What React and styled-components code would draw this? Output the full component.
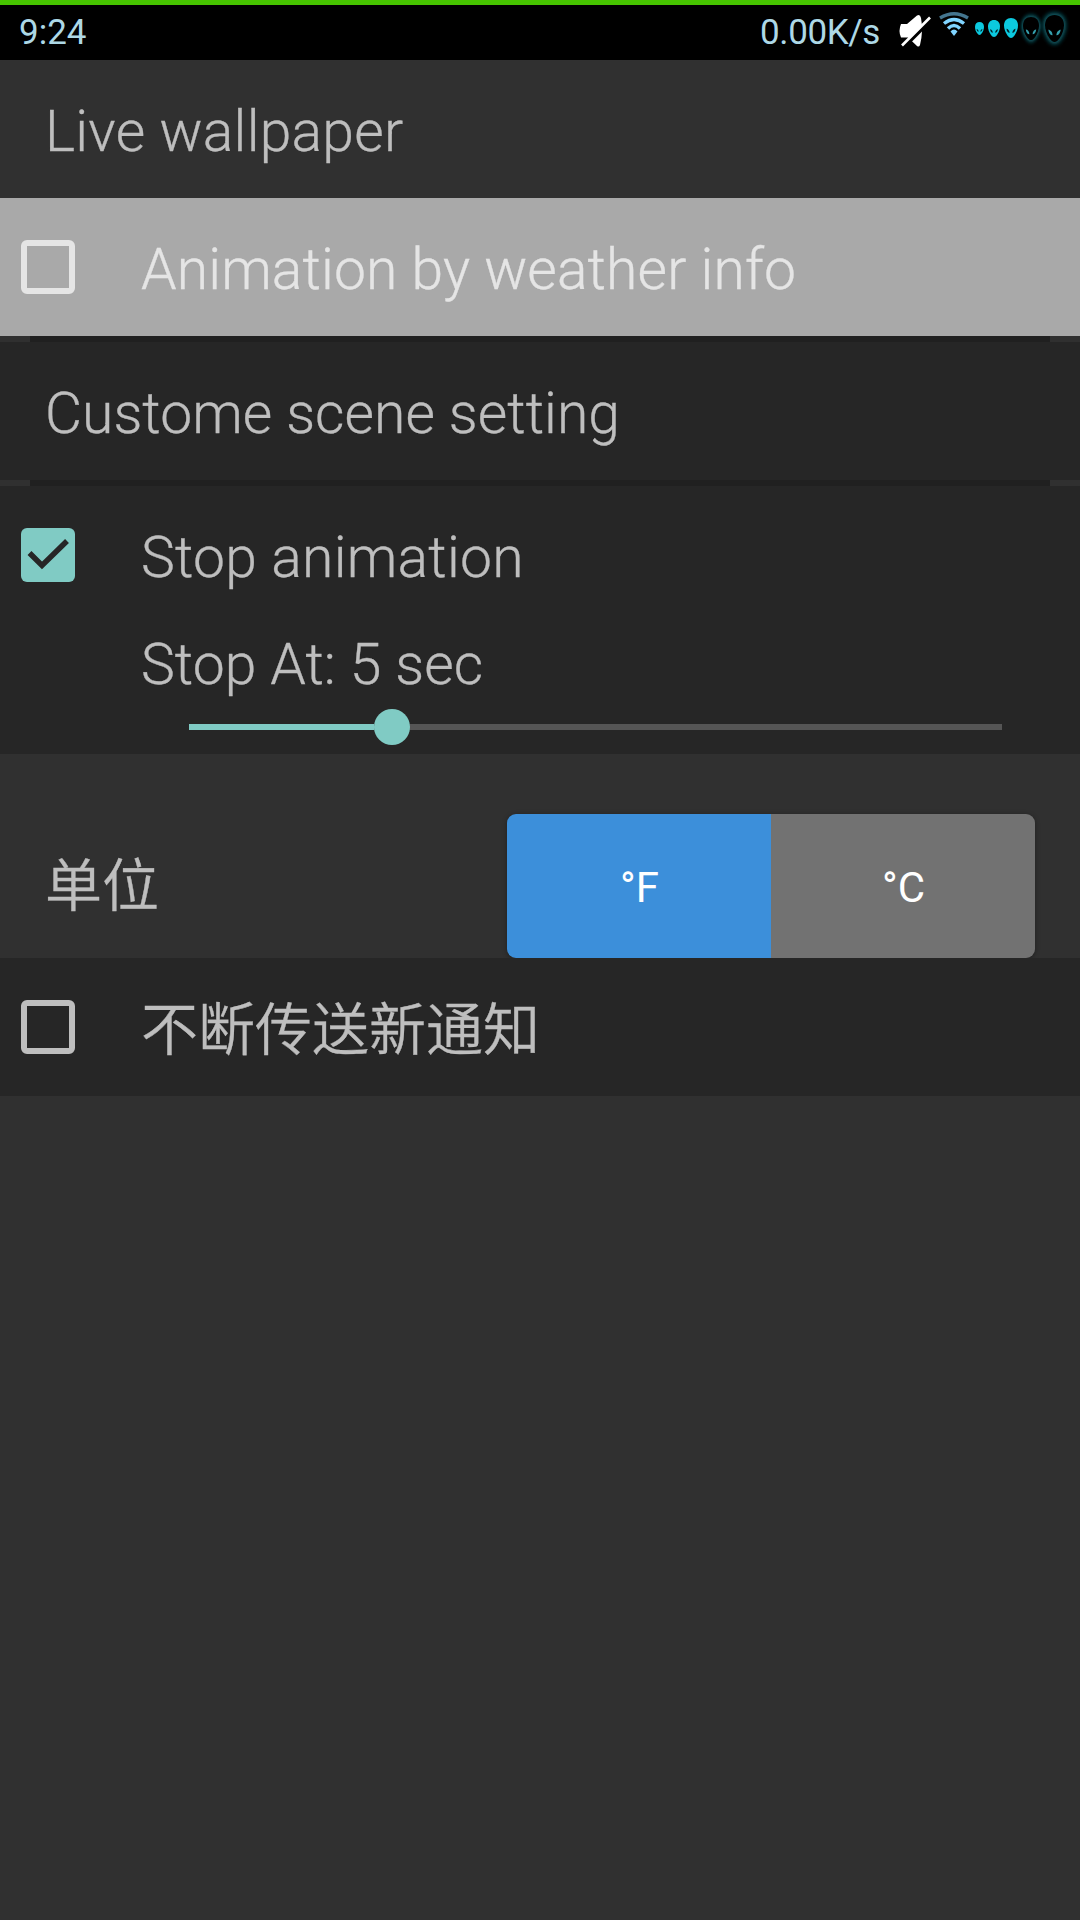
import React from "react";
import styled, { createGlobalStyle } from "styled-components";

const Global = createGlobalStyle`
  * { box-sizing: border-box; }
  body { margin: 0; background: #303030; }
`;

const Screen = styled.main`
  display: flex;
  flex-direction: column;
  width: 1080px;
  height: 1920px;
  overflow: hidden;
  background: #303030;
  color: #bebebe;
  font-family: Roboto, "Noto Sans CJK SC", sans-serif;
  font-weight: 300;
  font-size: 57px;
`;

const StatusBar = styled.header`
  display: flex;
  height: 60px;
  border-top: 5px solid #46c400;
  background: #000;
  color: #add8e6;
  font-size: 35px;
  font-weight: 400;
  line-height: 55px;
  padding-left: 19px;
`;

const Clock = styled.span`
  flex: 1;
`;

const Speed = styled.span`
  letter-spacing: -0.4px;
`;

const StatusIcons = styled.svg`
  display: block;
  width: 190px;
  height: 55px;
  margin-left: 10px;
`;

const Row = styled.section`
  display: flex;
  align-items: center;
  height: 138px;
  padding: 0 45px 0 ${(p) => (p.$check ? 21 : 45)}px;
  background: ${(p) => p.$bg || "#303030"};
  color: ${(p) => p.$fg || "#bebebe"};
`;

const Label = styled.span`
  line-height: 68px;
  padding-top: ${(p) => (p.$cjk ? 8 : 5)}px;
  font-weight: ${(p) => (p.$cjk ? 350 : 300)};
  letter-spacing: ${(p) => p.$track || 0}px;
  -webkit-text-stroke: 0.35px currentColor;
  white-space: nowrap;
`;

const Box = styled.span`
  display: block;
  flex: none;
  width: 54px;
  height: 54px;
  margin-right: 66px;
  border: 6px solid currentColor;
  border-radius: 6px;
`;

const CheckedBox = styled.svg`
  flex: none;
  width: 54px;
  height: 54px;
  margin-right: 66px;
`;

const Divider = styled.hr`
  width: 1020px;
  height: 6px;
  margin: 0 auto;
  border: 0;
  background: #202020;
`;

const StopPanel = styled.section`
  height: 130px;
  padding: 7px 78px 0 141px;
  background: #262626;
`;

const Track = styled.div`
  display: flex;
  align-items: center;
  height: 6px;
  margin: 25px 0 0 48px;
  background: #555;
`;

const Fill = styled.div`
  width: 185px;
  height: 6px;
  background: #80cbc4;
`;

const Thumb = styled.div`
  width: 36px;
  height: 36px;
  border-radius: 50%;
  background: #80cbc4;
`;

const UnitRow = styled.section`
  display: flex;
  align-items: flex-end;
  justify-content: space-between;
  height: 204px;
  padding: 0 45px;
`;

const UnitLabel = styled.span`
  height: 144px;
  padding-top: 1px;
  font-weight: 350;
  line-height: 144px;
  -webkit-text-stroke: 0.35px currentColor;
`;

const Segments = styled.div`
  display: flex;
  width: 528px;
  height: 144px;
  overflow: hidden;
  border-radius: 9px;
  box-shadow: 0 1px 5px rgba(0, 0, 0, 0.35);
`;

const Segment = styled.button`
  flex: 1;
  border: 0;
  padding: 3px 0 0 1px;
  background: ${(p) => (p.$active ? "#3c8fda" : "#727272")};
  color: #fff;
  font: 400 42px Roboto, sans-serif;
`;

const HEAD = "M10 0C4 0 0 3.500 0 9C0 13 2 17 4.500 20.500C6.500 23 8 24 10 24C12 24 13.500 23 15.500 20.500C18 17 20 13 20 9C20 3.500 16 0 10 0Z";

const Alien = ({ x, y, w, h, glow }) => (
  <svg x={x} y={y} width={w} height={h} viewBox="0 0 20 24" preserveAspectRatio="none" overflow="visible">
    {glow && <path d={HEAD} fill="#11606b" stroke="#11606b" strokeWidth="4" filter="url(#glow)" />}
    <path d={HEAD} fill={glow ? "#000" : "#0cc9df"} />
    <path
      d="M3.500 13C5.500 13 8 15 8 18C5.500 18 4 16 3.500 13ZM16.500 13C14.500 13 12 15 12 18C14.500 18 16 16 16.500 13Z"
      fill={glow ? "#35a0ae" : "#02242a"}
    />
  </svg>
);

const Indicators = () => (
  <StatusIcons viewBox="890 5 190 55">
    <defs>
      <filter id="glow" x="-50%" y="-50%" width="200%" height="200%">
        <feGaussianBlur stdDeviation="2" />
      </filter>
    </defs>
    <path d="M901 24H907L917 15.500Q920 13.500 921 18Q923.500 31 920 45Q919 47.500 917 46L908 37.500H901Q898 31 901 24Z" fill="#fff" />
    <path d="M904 47L932 19" stroke="#000" strokeWidth="3.500" />
    <path d="M902 45.500L930 17.500" stroke="#fff" strokeWidth="2.600" />
    <g fill="none" strokeWidth="3.400">
      <path d="M940 18Q954 9.500 968 18" stroke="#44758f" />
      <path d="M944 23.500Q954 15.500 964 23.500" stroke="#80d4ff" />
      <path d="M948 28.500Q954 22.500 960 28.500" stroke="#80d4ff" />
    </g>
    <path d="M950.500 31.500Q954 27.500 957.500 31.500L954 36Z" fill="#80d4ff" />
    <Alien x={975} y={22} w={9} h={13} />
    <Alien x={988} y={20} w={12} h={17} />
    <Alien x={1004} y={18} w={14} h={20} />
    <Alien x={1023} y={17} w={16} h={23} glow />
    <Alien x={1045} y={15} w={19} h={27} glow />
  </StatusIcons>
);

export default function App() {
  return (
    <Screen>
      <Global />
      <StatusBar>
        <Clock>9:24</Clock>
        <Speed>0.00K/s</Speed>
        <Indicators />
      </StatusBar>
      <Row>
        <Label $track={0.25}>Live wallpaper</Label>
      </Row>
      <Row $check $bg="#a9a9a9" $fg="#e5e5e5">
        <Box />
        <Label $track={0.13}>Animation by weather info</Label>
      </Row>
      <Divider />
      <Row $bg="#262626">
        <Label $track={0.04}>Custome scene setting</Label>
      </Row>
      <Divider />
      <Row $check $bg="#262626">
        <CheckedBox viewBox="0 0 54 54">
          <rect width="54" height="54" rx="6" fill="#80cbc4" />
          <path d="M8.500 25L21 37.500L46 13" fill="none" stroke="#262626" strokeWidth="5.500" />
        </CheckedBox>
        <Label $track={0.25}>Stop animation</Label>
      </Row>
      <StopPanel>
        <Label $track={0.04}>Stop At: 5 sec</Label>
        <Track>
          <Fill />
          <Thumb />
        </Track>
      </StopPanel>
      <UnitRow>
        <UnitLabel>单位</UnitLabel>
        <Segments>
          <Segment $active>°F</Segment>
          <Segment>°C</Segment>
        </Segments>
      </UnitRow>
      <Row $check $bg="#262626">
        <Box />
        <Label $cjk>不断传送新通知</Label>
      </Row>
    </Screen>
  );
}
